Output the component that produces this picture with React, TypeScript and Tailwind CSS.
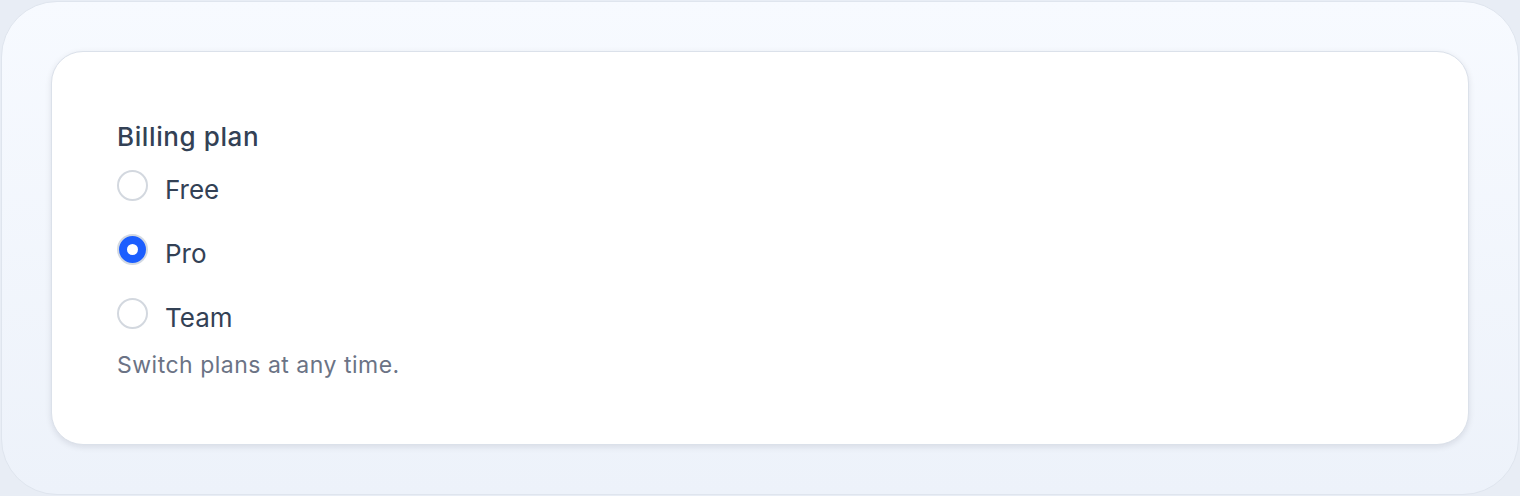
import { useState } from 'react'

const PLANS = ['Free', 'Pro', 'Team']

export default function App() {
    const [plan, setPlan] = useState('Pro')

    return (
        <main
            className="h-[496px] w-[1520px] bg-[#e8edf5] p-px"
            style={{ fontFamily: 'Inter, "Noto Sans", sans-serif' }}
        >
            <div className="h-full rounded-[56px] border border-[#dfe5ee] bg-gradient-to-b from-[#f7faff] to-[#edf2fa] p-[49px]">
                {/* Card */}
                <div className="h-[394px] rounded-[32px] border border-[#dbe1ea] bg-white px-[65px] pt-[69px] shadow-[0_2px_6px_rgba(15,23,42,0.10)]">
                    <p className="text-[26px] leading-[32px] font-medium tracking-[0.6px] text-[#334155]">Billing plan</p>
                    <div className="flex flex-col">
                        {PLANS.map((p) => {
                            const checked = plan === p
                            return (
                                <label
                                    key={p}
                                    onClick={() => setPlan(p)}
                                    className="flex h-[64px] cursor-pointer items-center gap-[17px]"
                                >
                                    {checked ? (
                                        <span className="flex h-[31px] w-[31px] items-center justify-center rounded-full border-2 border-[#d3d9e2] bg-[#1c5efe]">
                                            <span className="h-[11px] w-[11px] rounded-full bg-white" />
                                        </span>
                                    ) : (
                                        <span className="h-[31px] w-[31px] rounded-full border-2 border-[#d3d8df] bg-white" />
                                    )}
                                    <span className="pt-[10px] text-[26px] leading-[32px] text-[#334155]">{p}</span>
                                </label>
                            )
                        })}
                    </div>
                    <p className="mt-[6px] text-[23px] leading-[28px] tracking-[0.5px] text-[#6b7385]">Switch plans at any time.</p>
                </div>
            </div>
        </main>
    )
}
